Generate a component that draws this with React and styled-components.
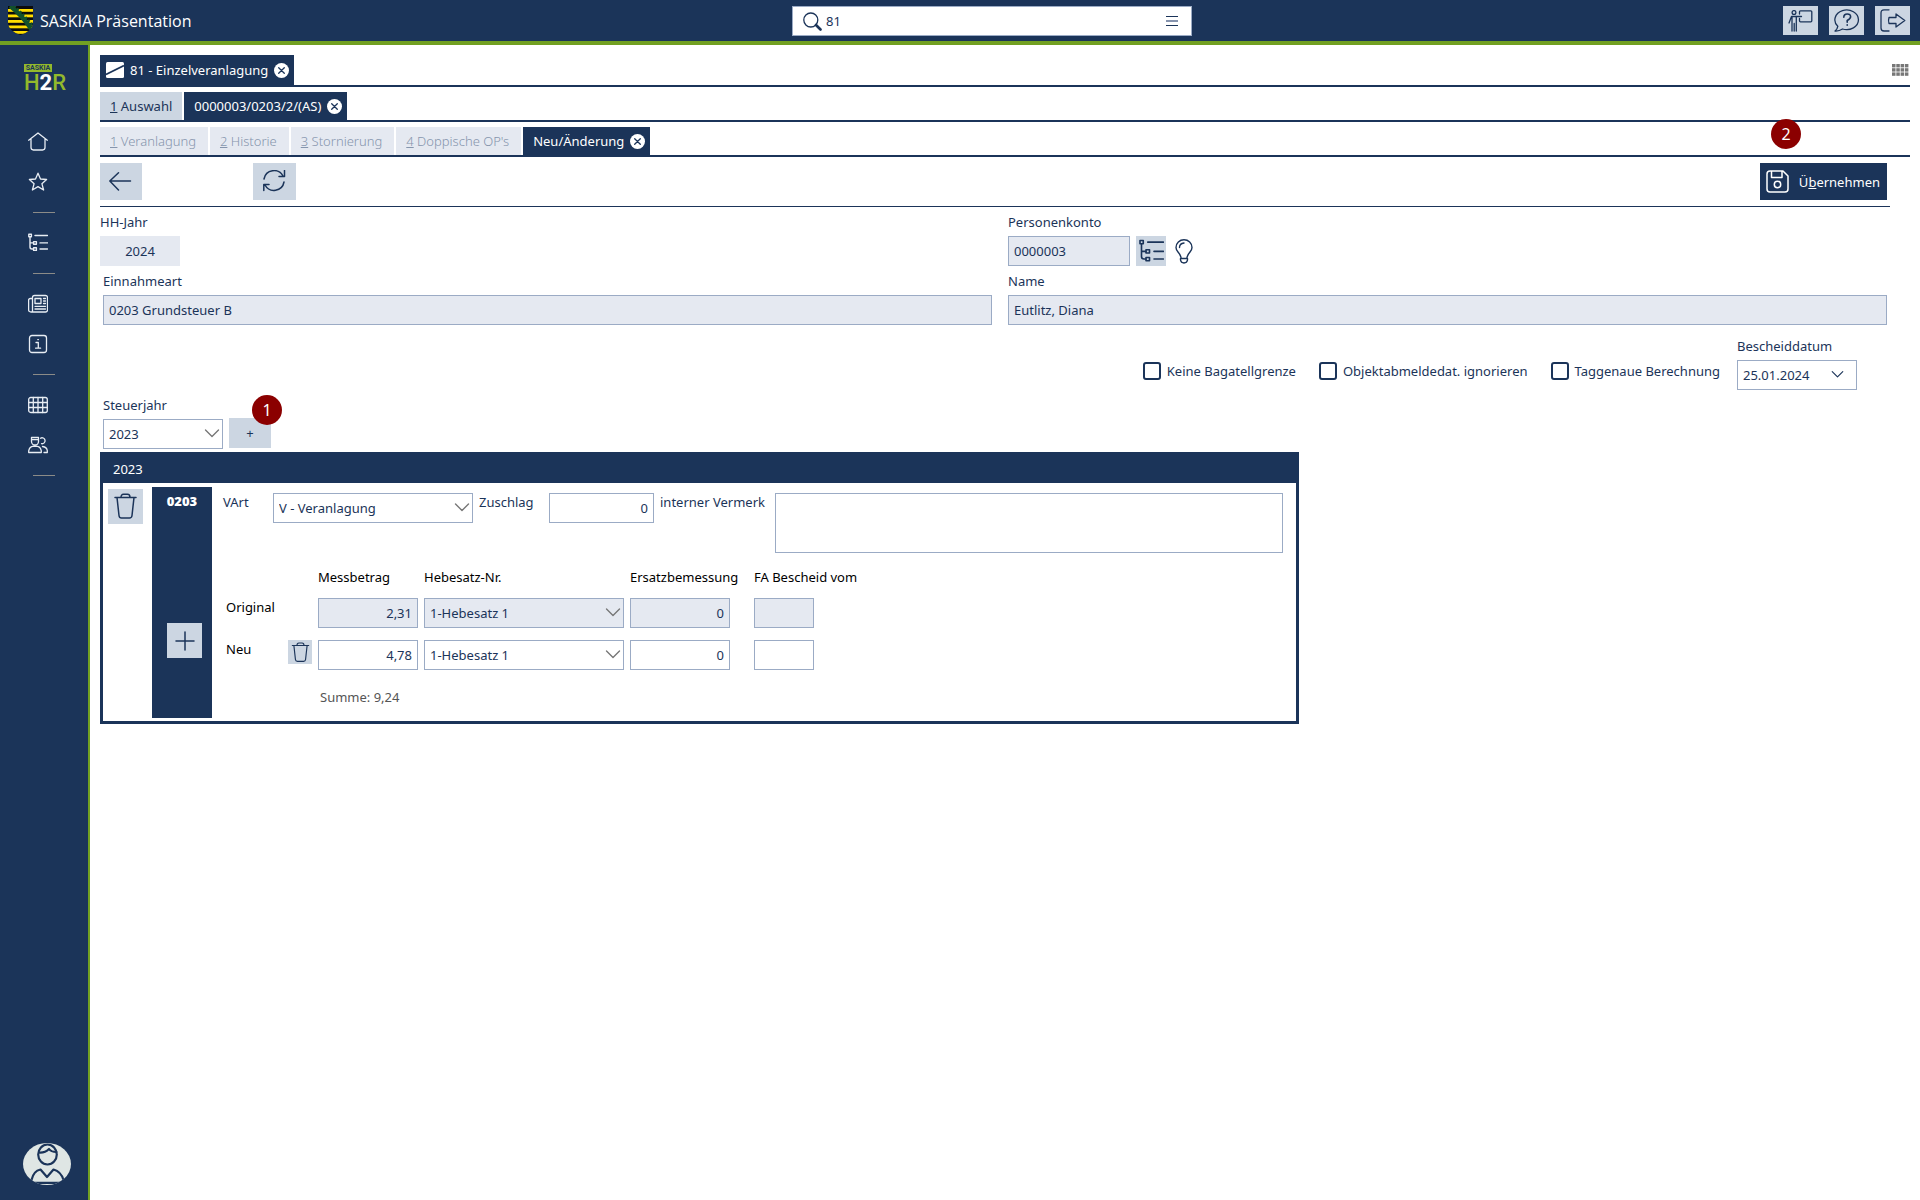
import React, { useState } from "react";
import styled, { createGlobalStyle, css } from "styled-components";

const navy = "#1b3459";
const steel = "#ccd6e2";
const pale = "#e5e9f1";
const line = "#9babc5";

const tabs = [
  { key: "1", label: "Veranlagung" },
  { key: "2", label: "Historie" },
  { key: "3", label: "Stornierung" },
  { key: "4", label: "Doppische OP's" },
];

const checks = [
  "Keine Bagatellgrenze",
  "Objektabmeldedat. ignorieren",
  "Taggenaue Berechnung",
];

const rows = [
  { name: "Original", betrag: "2,31", readOnly: true },
  { name: "Neu", betrag: "4,78", readOnly: false },
];

/* ---------- icons ---------- */

const Icon = ({ w = 20, h = 20, box, sw = 1.3, children }) => (
  <svg
    width={w}
    height={h}
    viewBox={box || `0 0 ${w} ${h}`}
    fill="none"
    stroke="currentColor"
    strokeWidth={sw}
    strokeLinecap="round"
    strokeLinejoin="round"
    aria-hidden="true"
  >
    {children}
  </svg>
);

const HomeIcon = () => (
  <Icon>
    <path d="M.7 8.2 10 1l9.3 7.2M3 7v8.6Q3 18 5.400 18h9.200Q17 18 17 15.600V7" />
  </Icon>
);

const StarIcon = () => (
  <Icon>
    <path d="M10 1.200 12.500 7l6.100.5-4.700 4.200 1.700 6.300-5.600-3.400L4.400 18l1.700-6.300L1.400 7.500 7.500 7z" />
  </Icon>
);

const TreeIcon = ({ size = 20, sw = 1.4 }) => (
  <Icon w={size} h={size} box="0 0 20 20" sw={sw}>
    <rect x="0.8" y="1.200" width="2.600" height="2.600" />
    <rect x="5.600" y="8.600" width="2.800" height="2.600" />
    <rect x="5.600" y="14.800" width="2.800" height="2.600" />
    <path d="M2 4v10q0 2 2 2h1.500M2 9.900h3.500M7 2.500h12.500M12 9.900h7.500M12 16h7.500" />
  </Icon>
);

const NewsIcon = () => (
  <Icon>
    <path d="M4.500 17V3.500Q4.500 1.500 6.500 1.500h11q2 0 2 2v12.500q0 2-2 2H3Q.6 18 .6 15.600V6q0-1.500 1.800-1.500h2" />
    <rect x="7" y="4.500" width="6" height="5" />
    <path d="M15.500 4.500h2M15.500 7h2M15.500 9.500h2M7 12.300h10.500M7 15h10.500" />
  </Icon>
);

const InfoIcon = () => (
  <Icon>
    <rect x="1.500" y="1.500" width="17" height="17" rx="2.500" />
    <path d="M8 8.500h2.300v5.500M7.600 14.200h5M9.800 5.600h.6" />
  </Icon>
);

const GridIcon = () => (
  <Icon>
    <rect x=".7" y="2.500" width="18.600" height="15" rx="2" />
    <path d="M.7 7.500h18.600M.7 12.500h18.600M5.300 2.500v15M10 2.500v15M14.700 2.500v15" />
  </Icon>
);

const PeopleIcon = () => (
  <Icon>
    <path d="M3.500 2.500h7v4a3.500 3.500 0 0 1-7 0zM3.500 4.700h7M.7 17.500v-1.700Q1.500 12 4.500 11.400h5q3 .6 3.800 4.400v1.700zM12.500 3.200a3 3 0 1 1 1 5.500M14.500 11.500q4.500.5 4.800 4.300v1.700H16" />
  </Icon>
);

const CloseMark = () => (
  <Icon w={15} h={15} sw={1.3}>
    <circle cx="7.500" cy="7.500" r="7.500" fill="#fff" stroke="none" />
    <path d="m4.700 4.700 5.600 5.600m0-5.600-5.600 5.600" stroke={navy} />
  </Icon>
);

const TrashIcon = ({ size = 27 }) => (
  <Icon w={size} h={size} box="0 0 27 27" sw={1.5}>
    <path d="M3 4.500h21M9 4.500q0-3.200 2.500-3.200h4q2.500 0 2.500 3.200M5 4.500l2 18q.3 2.500 2.500 2.500h8q2.200 0 2.500-2.500l2-18" />
  </Icon>
);

const Shield = () => (
  <svg width="25" height="29" viewBox="0 0 25 29" aria-hidden="true">
    <clipPath id="shield">
      <path d="M0 0h25v17Q24.500 25 12.500 29 .5 25 0 17z" />
    </clipPath>
    <g clipPath="url(#shield)">
      <rect width="25" height="29" fill="#0c0c0c" />
      {[3, 8.500, 14, 19.500, 25].map((y) => (
        <rect key={y} y={y} width="25" height="2.800" fill="#ffdd00" />
      ))}
      <path d="M2 0Q13 8 24 24" stroke="#12502c" strokeWidth="4.500" fill="none" />
      <path d="M6 0Q16 9 25 20" stroke="#12502c" strokeWidth="2.500" strokeDasharray="2.200 1.800" fill="none" />
    </g>
  </svg>
);

/* ---------- styled parts ---------- */

const GlobalStyle = createGlobalStyle`
  * { box-sizing: border-box; }
  body {
    margin: 0;
    background: #fff;
    color: ${navy};
    font: 13px/18px "Noto Sans", "Open Sans", sans-serif;
  }
  button, input, select, textarea { font: inherit; color: inherit; border-radius: 0; }
  button { border: 0; padding: 0; cursor: pointer; }
  svg { display: block; flex: none; }
`;

const Page = styled.div`
  display: flex;
  flex-direction: column;
  min-height: 100vh;
`;

const Header = styled.header`
  display: grid;
  grid-template-columns: 784fr 400px 718fr;
  align-items: start;
  height: 45px;
  padding: 6px 10px 0 8px;
  background: ${navy};
  border-bottom: 4px solid #72a022;
`;

const Brand = styled.div`
  display: flex;
  align-items: center;
  gap: 7px;
  color: #fff;
  font-family: "Open Sans", "Noto Sans", sans-serif;
  font-size: 16px;
`;

const Search = styled.label`
  display: flex;
  align-items: center;
  gap: 4px;
  height: 30px;
  padding: 0 13px 0 10px;
  background: #fff;
  border: 1px solid ${line};

  input {
    flex: 1;
    min-width: 0;
    padding: 0;
    border: 0;
    outline: 0;
  }
`;

const HeaderTools = styled.div`
  display: flex;
  justify-content: flex-end;
  gap: 11px;
`;

const IconButton = styled.button`
  display: flex;
  align-items: center;
  justify-content: center;
  flex: none;
  width: ${(p) => p.$w || 35}px;
  height: ${(p) => p.$h || 35}px;
  background: ${steel};
`;

const Body = styled.div`
  display: flex;
  flex: 1;
`;

const Sidebar = styled.nav`
  display: flex;
  flex-direction: column;
  width: 90px;
  flex: none;
  padding: 19px 0 15px;
  background: ${navy};
  border-right: 2px solid #72a022;
  color: #fff;
`;

const Logo = styled.div`
  width: 42px;
  margin: 0 0 29px 24px;
  font-family: Roboto, sans-serif;
`;

const LogoTag = styled.div`
  width: 28px;
  background: #93b92c;
  color: ${navy};
  font-size: 7px;
  font-weight: 700;
  line-height: 8px;
  text-align: center;
`;

const LogoName = styled.div`
  color: #93b92c;
  font-size: 22px;
  font-weight: 500;
  line-height: 21px;

  b { color: #fff; }
`;

const NavLink = styled.a`
  display: flex;
  align-items: center;
  height: 40px;
  margin-left: 28px;
  color: #e8edf4;
`;

const NavRule = styled.hr`
  width: 22px;
  height: 1px;
  margin: 10px 0 10px 33px;
  border: 0;
  background: #8b8b88;
`;

const Avatar = styled.button`
  width: 48px;
  height: 42px;
  margin: auto 0 0 23px;
  border-radius: 50%;
  background: #dfe6e4;
  color: ${navy};
  overflow: hidden;
`;

const Main = styled.main`
  flex: 1;
  min-width: 0;
  padding: 10px 10px 0;
`;

const TabRow = styled.div`
  display: flex;
  align-items: stretch;
  gap: 2px;
  height: ${(p) => (p.$tall ? 32 : 30)}px;
  margin-bottom: 5px;
  border-bottom: 2px solid ${navy};

  &:last-of-type { margin-bottom: 0; }
`;

const Tab = styled.button`
  display: flex;
  align-items: center;
  gap: 6px;
  padding: 0 10px;
  background: ${steel};
  white-space: nowrap;

  ${(p) =>
    p.$active &&
    css`
      padding: 0 5px 0 ${p.$icon ? 6 : 10}px;
      background: ${navy};
      color: #fff;
    `}

  &:disabled {
    padding-right: 12px;
    background: ${pale};
    color: #8595ad;
    font-weight: 300;
  }
`;

const RasterButton = styled.button`
  margin-left: auto;
  align-self: center;
  padding-right: 1px;
  background: none;
`;

const Badge = styled.span`
  position: absolute;
  display: flex;
  align-items: center;
  justify-content: center;
  width: 30px;
  height: 30px;
  border-radius: 50%;
  background: #8b0000;
  color: #fff;
  font-size: 16px;
  ${(p) => p.$place}
`;

const Tabs = styled.div``;

const Content = styled.div`
  padding-right: 20px;
`;

const Toolbar = styled.div`
  position: relative;
  display: flex;
  align-items: flex-start;
  height: 50px;
  padding: 6px 3px 0 0;
  border-bottom: 1px solid ${navy};
`;

const Refresh = styled(IconButton)`
  margin-left: 111px;
`;

const Apply = styled.button`
  display: flex;
  align-items: center;
  gap: 10px;
  height: 37px;
  margin-left: auto;
  padding: 0 7px 0 6px;
  background: ${navy};
  color: #fff;
`;

const Fields = styled.div`
  display: grid;
  grid-template-columns: 892fr 879fr;
  column-gap: 16px;
  row-gap: 6px;
  padding: 6px 3px 0 0;
`;

const Field = styled.div`
  display: flex;
  flex-direction: column;
  align-items: flex-start;
  gap: 5px;
  padding-left: ${(p) => (p.$inset ? 3 : 0)}px;
`;

const Line = styled.div`
  display: flex;
  align-items: center;
  gap: 6px;
`;

const control = css`
  width: ${(p) => (p.$w ? `${p.$w}px` : "100%")};
  height: 30px;
  padding: 0 5px;
  border: 1px solid ${line};
  background: ${(p) => (p.$muted ? pale : "#fff")};
  text-align: ${(p) => p.$align || "left"};
  opacity: 1;
  outline: 0;
`;

const Input = styled.input`
  ${control}
`;

const YearInput = styled(Input)`
  border-color: ${pale};
`;

const SelectBox = styled.div`
  position: relative;
  width: ${(p) => p.$w}px;
  color: ${navy};

  select {
    ${control}
    width: 100%;
    appearance: none;
    background: ${(p) => (p.$muted ? pale : "#fff")};
  }

  svg {
    position: absolute;
    top: 10px;
    right: ${(p) => p.$right || 3}px;
    color: ${(p) => (p.$right ? navy : "#777")};
    pointer-events: none;
  }
`;

const Hint = styled.button`
  margin-left: 3px;
  background: none;
`;

const Options = styled.div`
  display: flex;
  justify-content: flex-end;
  align-items: flex-end;
  gap: 17px;
  padding: 12px 33px 0 0;
`;

const Checks = styled.div`
  display: flex;
  gap: 23px;
  height: 37px;
`;

const Check = styled.label`
  display: flex;
  align-items: flex-start;
  gap: 6px;

  input {
    appearance: none;
    width: 18px;
    height: 18px;
    margin: 9px 0 0;
    border: 2px solid ${navy};
    border-radius: 3px;
  }

  span { margin-top: 9px; }
`;

const YearPick = styled.div`
  display: flex;
  align-items: flex-end;
  gap: 6px;
  padding: 6px 0 3px;
`;

const AddYear = styled.div`
  position: relative;
  padding-bottom: 1px;
`;

const Panel = styled.section`
  max-width: 1199px;
  border: 3px solid ${navy};
`;

const PanelTitle = styled.h2`
  margin: 0;
  padding: 5px 10px 5px;
  background: ${navy};
  color: #fff;
  font-size: 13px;
  font-weight: 400;
`;

const PanelBody = styled.div`
  display: flex;
  padding: 4px 13px 3px 5px;
`;

const DeleteYear = styled(IconButton)`
  margin: 2px 9px 0 0;
`;

const Kind = styled.div`
  display: flex;
  flex-direction: column;
  align-items: center;
  justify-content: space-between;
  width: 60px;
  flex: none;
  padding: 5px 0 60px 5px;
  background: ${navy};
  color: #fff;
  font-weight: 700;

  strong { margin-left: -5px; }
  button { color: ${navy}; }
`;

const Detail = styled.div`
  flex: 1;
  min-width: 0;
  padding: 6px 0 12px 11px;
`;

const DetailTop = styled.div`
  display: flex;
  align-items: flex-start;
  gap: 6px;
`;

const TopLabel = styled.label`
  width: ${(p) => p.$w}px;
  flex: none;
  white-space: nowrap;
`;

const Note = styled.textarea`
  flex: 1;
  min-width: 0;
  height: 60px;
  border: 1px solid ${line};
  resize: none;
`;

const Amounts = styled.table`
  margin: 15px 0 0 3px;
  border-collapse: collapse;
  color: #000;

  th, td { padding: 0; text-align: left; vertical-align: top; font-weight: 400; }
  thead th { height: 30px; white-space: nowrap; }
  tbody tr { height: 42px; }
  input, select, button { color: ${navy}; }
`;

const Col = styled.col`
  width: ${(p) => p.$w}px;
`;

const Sum = styled.p`
  margin: 6px 0 0 97px;
  color: #555;
`;

/* ---------- components ---------- */

const Select = ({ id, value, w, muted, right, label }) => (
  <SelectBox $w={w} $muted={muted} $right={right}>
    <select id={id} aria-label={label} defaultValue={value} disabled={muted}>
      <option>{value}</option>
    </select>
    <Icon w={right ? 13 : 16} h={9} box="0 0 16 9" sw={1.4}>
      <path d="m1.500 1 6.500 6.500L14.500 1" />
    </Icon>
  </SelectBox>
);

const SideNav = () => (
  <Sidebar>
    <Logo>
      <LogoTag>SASKIA</LogoTag>
      <LogoName>H<b>2</b>R</LogoName>
    </Logo>
    <NavLink href="#start" aria-label="Start"><HomeIcon /></NavLink>
    <NavLink href="#favoriten" aria-label="Favoriten"><StarIcon /></NavLink>
    <NavRule />
    <NavLink href="#struktur" aria-label="Struktur"><TreeIcon /></NavLink>
    <NavRule />
    <NavLink href="#news" aria-label="Neuigkeiten"><NewsIcon /></NavLink>
    <NavLink href="#info" aria-label="Information"><InfoIcon /></NavLink>
    <NavRule />
    <NavLink href="#tabelle" aria-label="Tabelle"><GridIcon /></NavLink>
    <NavLink href="#personen" aria-label="Personen"><PeopleIcon /></NavLink>
    <NavRule />
    <Avatar aria-label="Profil">
      <Icon w={48} h={42} sw={2.2}>
        <ellipse cx="24.500" cy="11.500" rx="9.300" ry="10" />
        <path d="M16 9.500q6 .5 10-3.500 2 3 7.500 3M8.500 37q2-9 9-10.500L24 34l6.500-7.500q7.500 2 10 10.500M12 39.800h25" />
      </Icon>
    </Avatar>
  </Sidebar>
);

const TopBar = () => {
  const [query, setQuery] = useState("81");

  return (
    <Header>
      <Brand>
        <Shield />
        SASKIA Präsentation
      </Brand>
      <Search>
        <Icon w={19} h={19} sw={1.3}>
          <circle cx="7.800" cy="8" r="7" />
          <path d="m13 13 4.500 4.500" strokeWidth="2.600" />
        </Icon>
        <input
          aria-label="Suche"
          value={query}
          onChange={(e) => setQuery(e.target.value)}
        />
        <Icon w={12} h={10} sw={1}>
          <path d="M0 .5h12M0 9.500h12" strokeLinecap="butt" />
          <path d="M0 5h12" stroke="#8593ad" strokeWidth="2" strokeLinecap="butt" />
        </Icon>
      </Search>
      <HeaderTools>
        <IconButton $h={29} aria-label="Schulung">
          <Icon w={25} h={22}>
            <circle cx="6" cy="2.500" r="1.900" />
            <path d="M11.500 4V1.700Q11.500.8 12.500.8h10.300q1 0 1 1v9q0 1-1 1h-10.300q-1 0-1-1V8.500M1 13l2.500-6.500H13.500M4 7v14M8.300 7v14M6.200 13.500V21" />
          </Icon>
        </IconButton>
        <IconButton $h={29} aria-label="Hilfe">
          <Icon w={26} h={23}>
            <path d="M3.800 17.300A11.800 9.800 0 1 1 8.500 20Q5 22.300 1 22q2.300-1.700 2.800-4.700z" />
            <path d="M9.800 8.300q0-3.300 3.400-3.300t3.400 2.800q0 2-3.400 3.700v1.700M13.200 15.800v.4" strokeWidth="1.600" />
          </Icon>
        </IconButton>
        <IconButton $h={29} aria-label="Abmelden">
          <Icon w={26} h={23}>
            <path d="M9 .8H4Q1 .8 1 4v15q0 3 3 3h5M9 8.500h7V5l8.800 6.500L16 18v-3.500H9Q8 11.500 9 8.500z" />
          </Icon>
        </IconButton>
      </HeaderTools>
    </Header>
  );
};

const App = () => (
  <Page>
    <GlobalStyle />
    <TopBar />
    <Body>
      <SideNav />
      <Main>
        <Tabs>
          <TabRow $tall>
            <Tab $active $icon>
              <svg width="18" height="16" viewBox="0 0 18 16" aria-hidden="true">
                <rect width="18" height="16" rx="1.500" fill="#fff" />
                <path d="M0 12.500 18 3.500" stroke={navy} strokeWidth="1.600" />
              </svg>
              81 - Einzelveranlagung
              <CloseMark />
            </Tab>
            <RasterButton aria-label="Kacheln">
              <svg width="17" height="12" viewBox="0 0 17 12" fill="#777" aria-hidden="true">
                {[0, 4.300, 8.600, 12.900].map((x) =>
                  [0, 4.200, 8.400].map((y) => (
                    <rect key={`${x}-${y}`} x={x} y={y} width="3.500" height="3.400" />
                  ))
                )}
              </svg>
            </RasterButton>
          </TabRow>
          <TabRow>
            <Tab>
              <span><u>1</u> Auswahl</span>
            </Tab>
            <Tab $active>
              0000003/0203/2/(AS)
              <CloseMark />
            </Tab>
          </TabRow>
          <TabRow>
            {tabs.map((tab) => (
              <Tab key={tab.key} disabled>
                <span><u>{tab.key}</u> {tab.label}</span>
              </Tab>
            ))}
            <Tab $active>
              Neu/Änderung
              <CloseMark />
            </Tab>
          </TabRow>
        </Tabs>

        <Content>
          <Toolbar>
            <IconButton $w={42} $h={37} aria-label="Zurück">
              <Icon w={24} h={20} sw={1.500} box="1 0 24 20">
                <path d="M22.500 9H1.800M10.500.8 1.800 9l8.700 9" />
              </Icon>
            </IconButton>
            <Refresh $w={43} $h={37} aria-label="Aktualisieren">
              <Icon w={24} h={24} sw={1.500} box="0 1 24 24">
                <path d="M1 10A10.200 10.200 0 0 1 20 7M21.500 1.500v6H16M21 13A10.200 10.200 0 0 1 2 16M.8 21.500v-6H6" />
              </Icon>
            </Refresh>
            <Apply>
              <Icon w={23} h={23} sw={1.500}>
                <path d="M4 1h13l5 5v13q0 3-3 3H4q-3 0-3-3V4q0-3 3-3zM5.500 1.500V7.500h10.500V1.500" />
                <circle cx="11.500" cy="14.500" r="3.200" />
              </Icon>
              <span>Ü<u>b</u>ernehmen</span>
            </Apply>
            <Badge $place="right: 89px; top: -38px;">2</Badge>
          </Toolbar>

          <Fields>
            <Field>
              <label htmlFor="jahr">HH-Jahr</label>
              <YearInput id="jahr" $w={80} $muted $align="center" readOnly value="2024" />
            </Field>
            <Field>
              <label htmlFor="konto">Personenkonto</label>
              <Line>
                <Input id="konto" $w={122} $muted readOnly value="0000003" />
                <IconButton $w={30} $h={30} aria-label="Struktur">
                  <TreeIcon size={25} sw={1.3} />
                </IconButton>
                <Hint aria-label="Hinweis">
                  <Icon w={18} h={25} sw={1.400}>
                    <path d="M6 18.500Q5.500 16 3 13 1 10.500 1 8.500a8 7.700 0 0 1 16 0q0 2-2 4.500-2.500 3-3 5.500M5.500 19.500h7v1.500q-.5 3-3.500 3t-3.500-3zM4.500 8.500q0-4 4.500-4.500" />
                  </Icon>
                </Hint>
              </Line>
            </Field>
            <Field $inset>
              <label htmlFor="art">Einnahmeart</label>
              <Input id="art" $muted readOnly value="0203 Grundsteuer B" />
            </Field>
            <Field>
              <label htmlFor="name">Name</label>
              <Input id="name" $muted readOnly value="Eutlitz, Diana" />
            </Field>
          </Fields>

          <Options>
            <Checks>
              {checks.map((text) => (
                <Check key={text}>
                  <input type="checkbox" />
                  <span>{text}</span>
                </Check>
              ))}
            </Checks>
            <Field>
              <label htmlFor="datum">Bescheiddatum</label>
              <Select id="datum" value="25.01.2024" w={120} right={13} />
            </Field>
          </Options>

          <YearPick>
            <Field $inset>
              <label htmlFor="steuerjahr">Steuerjahr</label>
              <Select id="steuerjahr" value="2023" w={120} />
            </Field>
            <AddYear>
              <IconButton $w={42} $h={30} aria-label="Steuerjahr hinzufügen">+</IconButton>
              <Badge $place="right: -11px; top: -23px;">1</Badge>
            </AddYear>
          </YearPick>

          <Panel>
            <PanelTitle>2023</PanelTitle>
            <PanelBody>
              <DeleteYear aria-label="Jahr löschen">
                <TrashIcon />
              </DeleteYear>
              <Kind>
                <strong>0203</strong>
                <IconButton aria-label="Zeile hinzufügen">
                  <Icon w={20} h={20} sw={1.500}>
                    <path d="M1 10h18M10 1v18" />
                  </Icon>
                </IconButton>
              </Kind>
              <Detail>
                <DetailTop>
                  <TopLabel htmlFor="vart" $w={44}>VArt</TopLabel>
                  <Select id="vart" value="V - Veranlagung" w={200} />
                  <TopLabel htmlFor="zuschlag" $w={64}>Zuschlag</TopLabel>
                  <Input id="zuschlag" $w={105} $align="right" defaultValue="0" />
                  <TopLabel htmlFor="vermerk" $w={109}>interner Vermerk</TopLabel>
                  <Note id="vermerk" />
                </DetailTop>
                <Amounts>
                  <colgroup>
                    <Col $w={62} />
                    <Col $w={30} />
                    <Col $w={106} />
                    <Col $w={206} />
                    <Col $w={124} />
                    <Col $w={110} />
                  </colgroup>
                  <thead>
                    <tr>
                      <th />
                      <th />
                      <th>Messbetrag</th>
                      <th>Hebesatz-Nr.</th>
                      <th>Ersatzbemessung</th>
                      <th>FA Bescheid vom</th>
                    </tr>
                  </thead>
                  <tbody>
                    {rows.map((row) => (
                      <tr key={row.name}>
                        <th scope="row">{row.name}</th>
                        <td>
                          {!row.readOnly && (
                            <IconButton $w={24} $h={24} aria-label="Zeile löschen">
                              <TrashIcon size={21} />
                            </IconButton>
                          )}
                        </td>
                        <td>
                          <Input
                            aria-label={`Messbetrag ${row.name}`}
                            $w={100}
                            $align="right"
                            $muted={row.readOnly}
                            readOnly={row.readOnly}
                            defaultValue={row.betrag}
                          />
                        </td>
                        <td>
                          <Select
                            label={`Hebesatz-Nr. ${row.name}`}
                            value="1-Hebesatz 1"
                            w={200}
                            muted={row.readOnly}
                          />
                        </td>
                        <td>
                          <Input
                            aria-label={`Ersatzbemessung ${row.name}`}
                            $w={100}
                            $align="right"
                            $muted={row.readOnly}
                            readOnly={row.readOnly}
                            defaultValue="0"
                          />
                        </td>
                        <td>
                          <Input
                            aria-label={`FA Bescheid vom ${row.name}`}
                            $w={60}
                            $muted={row.readOnly}
                            readOnly={row.readOnly}
                          />
                        </td>
                      </tr>
                    ))}
                  </tbody>
                </Amounts>
                <Sum>Summe: 9,24</Sum>
              </Detail>
            </PanelBody>
          </Panel>
        </Content>
      </Main>
    </Body>
  </Page>
);

export default App;
